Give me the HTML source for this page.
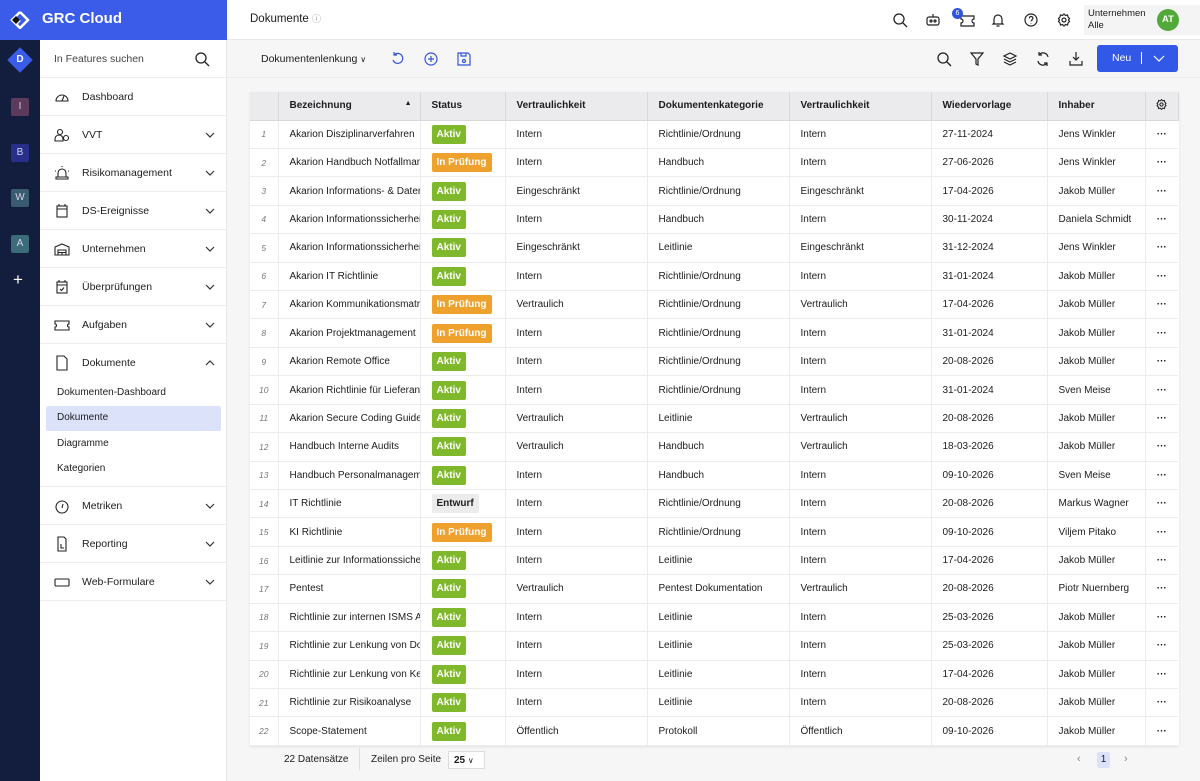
<!DOCTYPE html>
<html><head><meta charset="utf-8">
<style>
*{box-sizing:border-box;margin:0;padding:0}
body{width:1200px;height:781px;overflow:hidden;font-family:"Liberation Sans",sans-serif;color:#1c1c1c;background:#f6f6f7;position:relative;font-size:10px}
.abs{position:absolute}
#rail{left:0;top:40px;width:40px;height:741px;background:#131d3e}
#brand{left:0;top:0;width:227px;height:40px;background:#3a5ce9;color:#fff}
#brand .t{position:absolute;left:42px;top:10px;font-size:15px;font-weight:bold}
#top{left:227px;top:0;width:973px;height:40px;background:#fff;border-bottom:1px solid #e8e8ea}
#side{left:40px;top:40px;width:187px;height:741px;background:#fff;border-right:1px solid #e6e6e8}
.it{position:absolute;left:0;width:187px;height:38px;border-bottom:1px solid #ececee;font-size:10.5px}
.it span{position:absolute;left:42px;top:13px}
.it svg.ic{position:absolute;left:14px;top:11px}
.it .ch{position:absolute;right:12px;top:15px}
.sub{position:absolute;left:17px;font-size:10px}
.rb{position:absolute;left:11px;width:18px;height:18px;border-radius:2px;color:#cfd4e6;font-size:10px;text-align:center;line-height:18px}
table{position:absolute;left:250px;top:92px;width:928px;border-collapse:collapse;background:#fff;box-shadow:0 1px 3px rgba(0,0,0,.08);table-layout:fixed}
th{height:28px;background:#ebebed;text-align:left;font-weight:bold;font-size:10px;padding-left:11px;border-right:1px solid #d9d9dc;border-bottom:1px solid #d9d9dc}
td{height:28.43px;font-size:10px;padding-left:11px;border-bottom:1px solid #ececee;border-right:1px solid #ececee;white-space:nowrap;overflow:hidden}
td:first-child{text-align:center;padding:0;font-style:italic;color:#777;font-size:8.5px}
td:last-child{border-right:none;text-align:center;padding:0;font-weight:bold}
.b{display:inline-block;color:#fff;font-weight:bold;padding:0 5px;height:19px;line-height:19px;border-radius:2px;font-size:10px}
.a{background:#7fb82a}.p{background:#eea12c}.e{background:#ececec;color:#222}
.tb{position:absolute;top:51px}
</style></head><body>
<div id="brand" class="abs">
<svg class="abs" style="left:10px;top:11px" width="20" height="18" viewBox="0 0 20 18"><path d="M10 1 L18 9 L10 17 L6 13 L10 9 M10 1 L2 9 L6 13" fill="none" stroke="#fff" stroke-width="2.5"/><path d="M6 5 L2 9 L6 13 L10 9z" fill="#111"/></svg>
<div class="t">GRC Cloud</div></div>
<div id="rail" class="abs">
<div class="abs" style="left:11px;top:11px;width:18px;height:18px;background:#3a5ce9;transform:rotate(45deg)"></div>
<div class="abs" style="left:11px;top:14px;width:18px;text-align:center;color:#fff;font-size:10px;font-weight:bold">D</div>
<div class="rb" style="top:58px;background:#5b3a5c">I</div>
<div class="rb" style="top:104px;background:#272f8a">B</div>
<div class="rb" style="top:149px;background:#3a5a70">W</div>
<div class="rb" style="top:195px;background:#3c6b7a">A</div>
<div class="abs" style="left:13px;top:230px;color:#fff;font-size:17px">+</div>
</div>
<div id="top" class="abs">
<div class="abs" style="left:23px;top:12px;font-size:11.5px">Dokumente <span style="color:#999;font-size:9px">ⓘ</span></div>
<svg class="abs" style="left:665px;top:12px" width="16" height="16" viewBox="0 0 16 16" fill="none" stroke="#222" stroke-width="1.3"><circle cx="7" cy="7" r="5"/><path d="M11 11l4 4"/></svg>
<svg class="abs" style="left:698px;top:12px" width="16" height="16" viewBox="0 0 16 16" fill="none" stroke="#222" stroke-width="1.2"><rect x="2" y="5" width="12" height="8" rx="2"/><circle cx="6" cy="9" r="1"/><circle cx="10" cy="9" r="1"/><path d="M8 5V2"/></svg>
<svg class="abs" style="left:731px;top:12px" width="18" height="16" viewBox="0 0 18 16" fill="none" stroke="#222" stroke-width="1.2"><path d="M3 4h13v3a2 2 0 000 4v3H3v-3a2 2 0 000-4z"/></svg>
<div class="abs" style="left:725px;top:8px;width:11px;height:11px;border-radius:50%;background:#2e55e0;color:#fff;font-size:7px;text-align:center;line-height:11px">6</div>
<svg class="abs" style="left:763px;top:12px" width="16" height="16" viewBox="0 0 16 16" fill="none" stroke="#222" stroke-width="1.2"><path d="M4 11V7a4 4 0 018 0v4l1 1H3z M6.5 14h3"/></svg>
<svg class="abs" style="left:796px;top:12px" width="16" height="16" viewBox="0 0 16 16" fill="none" stroke="#222" stroke-width="1.2"><circle cx="8" cy="8" r="6"/><path d="M6.3 6.3a1.8 1.8 0 113 1.3c-.8.5-1.3.8-1.3 1.8M8 11v.5"/></svg>
<svg class="abs" style="left:829px;top:12px" width="16" height="16" viewBox="0 0 16 16" fill="none" stroke="#222" stroke-width="1.2"><circle cx="8" cy="8" r="2"/><path d="M8 2l1.5 1.5 2-.5.5 2 1.5 1.5-1 1.5 1 1.5-1.5 1.5-.5 2-2-.5L8 14l-1.5-1.5-2 .5-.5-2L2.5 9.5 3.5 8l-1-1.5L4 5l.5-2 2 .5z"/></svg>
<div class="abs" style="left:857px;top:5px;width:116px;height:30px;background:#f4f4f5"></div>
<div class="abs" style="left:861px;top:8px;font-size:9.5px;line-height:12px">Unternehmen<br>Alle</div>
<div class="abs" style="left:930px;top:9px;width:22px;height:22px;border-radius:50%;background:#52a838;color:#fff;font-size:9.5px;font-weight:bold;text-align:center;line-height:22px">AT</div>
</div>
<div id="side" class="abs">
<div class="it" style="top:0"><span style="left:14px;color:#444;top:13px">In Features suchen</span><svg class="abs" style="left:154px;top:11px" width="16" height="16" viewBox="0 0 16 16" fill="none" stroke="#222" stroke-width="1.3"><circle cx="7" cy="7" r="5"/><path d="M11 11l4 4"/></svg></div>
<div class="it" style="top:38px"><svg class="ic" width="16" height="16" viewBox="0 0 16 16" fill="none" stroke="#222" stroke-width="1.1"><path d="M2 12a6 6 0 1112 0z M8 12l2-5"/></svg><span>Dashboard</span></div>
<div class="it" style="top:76px"><svg class="ic" width="16" height="16" viewBox="0 0 16 16" fill="none" stroke="#222" stroke-width="1.1"><circle cx="6" cy="5" r="2.5"/><path d="M1 14v-2a4 4 0 018 0v2z"/><circle cx="12" cy="11" r="2.5"/></svg><span>VVT</span><svg class="ch" width="10" height="8" viewBox="0 0 10 8" fill="none" stroke="#333" stroke-width="1.2"><path d="M1 2l4 4 4-4"/></svg></div>
<div class="it" style="top:114px"><svg class="ic" width="16" height="16" viewBox="0 0 16 16" fill="none" stroke="#222" stroke-width="1.1"><path d="M4 12V8a4 4 0 018 0v4M2 12h12v2H2z M1 6h1M14 6h1M8 1v1"/></svg><span>Risikomanagement</span><svg class="ch" width="10" height="8" viewBox="0 0 10 8" fill="none" stroke="#333" stroke-width="1.2"><path d="M1 2l4 4 4-4"/></svg></div>
<div class="it" style="top:152px"><svg class="ic" width="16" height="16" viewBox="0 0 16 16" fill="none" stroke="#222" stroke-width="1.1"><rect x="3" y="3" width="10" height="11"/><path d="M3 6h10M5 1v2M11 1v2"/></svg><span>DS-Ereignisse</span><svg class="ch" width="10" height="8" viewBox="0 0 10 8" fill="none" stroke="#333" stroke-width="1.2"><path d="M1 2l4 4 4-4"/></svg></div>
<div class="it" style="top:190px"><svg class="ic" width="16" height="16" viewBox="0 0 16 16" fill="none" stroke="#222" stroke-width="1.1"><path d="M1 6l7-3 7 3v8H1z M4 9h8v5H4z M4 11.5h8M8 11.5V14"/></svg><span>Unternehmen</span><svg class="ch" width="10" height="8" viewBox="0 0 10 8" fill="none" stroke="#333" stroke-width="1.2"><path d="M1 2l4 4 4-4"/></svg></div>
<div class="it" style="top:228px"><svg class="ic" width="16" height="16" viewBox="0 0 16 16" fill="none" stroke="#222" stroke-width="1.1"><rect x="3" y="3" width="10" height="11"/><path d="M3 6h10M5 1v2M11 1v2M6 10l1.5 1.5L10 8.5"/></svg><span>Überprüfungen</span><svg class="ch" width="10" height="8" viewBox="0 0 10 8" fill="none" stroke="#333" stroke-width="1.2"><path d="M1 2l4 4 4-4"/></svg></div>
<div class="it" style="top:266px"><svg class="ic" width="16" height="16" viewBox="0 0 16 16" fill="none" stroke="#222" stroke-width="1.1"><path d="M1 4h14v3a1.5 1.5 0 000 3v3H1v-3a1.5 1.5 0 000-3z"/></svg><span>Aufgaben</span><svg class="ch" width="10" height="8" viewBox="0 0 10 8" fill="none" stroke="#333" stroke-width="1.2"><path d="M1 2l4 4 4-4"/></svg></div>
<div class="it" style="top:304px;height:143px"><svg class="ic" width="16" height="16" viewBox="0 0 16 16" fill="none" stroke="#222" stroke-width="1.1"><path d="M3 1h7l3 3v11H3z"/></svg><span>Dokumente</span><svg class="ch" width="10" height="8" viewBox="0 0 10 8" fill="none" stroke="#333" stroke-width="1.2"><path d="M1 6l4-4 4 4"/></svg>
<div class="sub" style="top:43px">Dokumenten-Dashboard</div>
<div class="abs" style="left:6px;top:62px;width:175px;height:25px;background:#dde2fb;border-radius:2px"></div>
<div class="sub" style="top:68px">Dokumente</div>
<div class="sub" style="top:94px">Diagramme</div>
<div class="sub" style="top:119px">Kategorien</div></div>
<div class="it" style="top:447px"><svg class="ic" width="16" height="16" viewBox="0 0 16 16" fill="none" stroke="#222" stroke-width="1.1"><circle cx="8" cy="9" r="6"/><path d="M8 10l1-4"/></svg><span>Metriken</span><svg class="ch" width="10" height="8" viewBox="0 0 10 8" fill="none" stroke="#333" stroke-width="1.2"><path d="M1 2l4 4 4-4"/></svg></div>
<div class="it" style="top:485px"><svg class="ic" width="16" height="16" viewBox="0 0 16 16" fill="none" stroke="#222" stroke-width="1.1"><path d="M4 1h6l2 2v12H4z M7 8v4h3"/></svg><span>Reporting</span><svg class="ch" width="10" height="8" viewBox="0 0 10 8" fill="none" stroke="#333" stroke-width="1.2"><path d="M1 2l4 4 4-4"/></svg></div>
<div class="it" style="top:523px"><svg class="ic" width="16" height="16" viewBox="0 0 16 16" fill="none" stroke="#222" stroke-width="1.1"><rect x="1" y="5" width="14" height="7" rx="1"/></svg><span>Web-Formulare</span><svg class="ch" width="10" height="8" viewBox="0 0 10 8" fill="none" stroke="#333" stroke-width="1.2"><path d="M1 2l4 4 4-4"/></svg></div>
</div>
<div class="abs" style="left:227px;top:40px;width:973px;height:38px;border-bottom:1px solid #ececee"></div>
<div class="abs" style="left:261px;top:53px;font-size:10.5px">Dokumentenlenkung <span style="font-size:8px">∨</span></div>
<svg class="tb" style="left:390px" width="16" height="16" viewBox="0 0 16 16" fill="none" stroke="#3553d8" stroke-width="1.2"><path d="M4 4a5 5 0 11-1 5M4 1v3h3"/></svg>
<svg class="tb" style="left:423px" width="16" height="16" viewBox="0 0 16 16" fill="none" stroke="#3553d8" stroke-width="1.2"><circle cx="8" cy="8" r="6"/><path d="M8 5v6M5 8h6"/></svg>
<svg class="tb" style="left:456px" width="16" height="16" viewBox="0 0 16 16" fill="none" stroke="#3553d8" stroke-width="1.2"><path d="M2 2h10l2 2v10H2z M5 2v3h5V2"/><circle cx="8" cy="10" r="1.5"/></svg>
<svg class="tb" style="left:936px" width="16" height="16" viewBox="0 0 16 16" fill="none" stroke="#222" stroke-width="1.3"><circle cx="7" cy="7" r="5"/><path d="M11 11l4 4"/></svg>
<svg class="tb" style="left:969px" width="16" height="16" viewBox="0 0 16 16" fill="none" stroke="#222" stroke-width="1.2"><path d="M2 2h12l-5 6v6l-2-1V8z"/></svg>
<svg class="tb" style="left:1002px" width="16" height="16" viewBox="0 0 16 16" fill="none" stroke="#222" stroke-width="1.2"><path d="M8 2l6 3-6 3-6-3z M2 8l6 3 6-3M2 11l6 3 6-3"/></svg>
<svg class="tb" style="left:1035px" width="16" height="16" viewBox="0 0 16 16" fill="none" stroke="#222" stroke-width="1.2"><path d="M13 6a5 5 0 00-9-2M3 10a5 5 0 009 2M4 1v3h3M12 15v-3H9"/></svg>
<svg class="tb" style="left:1068px" width="16" height="16" viewBox="0 0 16 16" fill="none" stroke="#222" stroke-width="1.2"><path d="M8 1v8M5 6l3 3 3-3M2 10v4h12v-4"/></svg>
<div class="abs" style="left:1097px;top:45px;width:81px;height:27px;background:#3258e8;border-radius:3px;color:#fff;font-size:10.5px"><span class="abs" style="left:15px;top:7px">Neu</span><span class="abs" style="left:44px;top:7px;width:1px;height:12px;background:#fff"></span><svg class="abs" style="left:56px;top:10px" width="12" height="8" viewBox="0 0 12 8" fill="none" stroke="#fff" stroke-width="1.2"><path d="M1 1l5 5 5-5"/></svg></div>
<table>
<colgroup><col style="width:28px"><col style="width:142px"><col style="width:85px"><col style="width:142px"><col style="width:142px"><col style="width:142px"><col style="width:116px"><col style="width:98px"><col style="width:33px"></colgroup>
<tr><th></th><th>Bezeichnung <span style="float:right;margin-right:8px;font-size:7px">▲</span></th><th>Status</th><th>Vertraulichkeit</th><th>Dokumentenkategorie</th><th>Vertraulichkeit</th><th>Wiedervorlage</th><th>Inhaber</th><th style="padding-left:9px"><svg width="13" height="13" viewBox="0 0 16 16" fill="none" stroke="#222" stroke-width="1.3"><circle cx="8" cy="8" r="2"/><path d="M8 2l1.5 1.5 2-.5.5 2 1.5 1.5-1 1.5 1 1.5-1.5 1.5-.5 2-2-.5L8 14l-1.5-1.5-2 .5-.5-2L2.5 9.5 3.5 8l-1-1.5L4 5l.5-2 2 .5z"/></svg></th></tr>
<tr><td>1</td><td>Akarion Disziplinarverfahren</td><td><span class="b a">Aktiv</span></td><td>Intern</td><td>Richtlinie/Ordnung</td><td>Intern</td><td>27-11-2024</td><td>Jens Winkler</td><td>···</td></tr>
<tr><td>2</td><td>Akarion Handbuch Notfallmanagement</td><td><span class="b p">In Prüfung</span></td><td>Intern</td><td>Handbuch</td><td>Intern</td><td>27-06-2026</td><td>Jens Winkler</td><td>···</td></tr>
<tr><td>3</td><td>Akarion Informations- &amp; Datenschutz</td><td><span class="b a">Aktiv</span></td><td>Eingeschränkt</td><td>Richtlinie/Ordnung</td><td>Eingeschränkt</td><td>17-04-2026</td><td>Jakob Müller</td><td>···</td></tr>
<tr><td>4</td><td>Akarion Informationssicherheit</td><td><span class="b a">Aktiv</span></td><td>Intern</td><td>Handbuch</td><td>Intern</td><td>30-11-2024</td><td>Daniela Schmidt</td><td>···</td></tr>
<tr><td>5</td><td>Akarion Informationssicherheit</td><td><span class="b a">Aktiv</span></td><td>Eingeschränkt</td><td>Leitlinie</td><td>Eingeschränkt</td><td>31-12-2024</td><td>Jens Winkler</td><td>···</td></tr>
<tr><td>6</td><td>Akarion IT Richtlinie</td><td><span class="b a">Aktiv</span></td><td>Intern</td><td>Richtlinie/Ordnung</td><td>Intern</td><td>31-01-2024</td><td>Jakob Müller</td><td>···</td></tr>
<tr><td>7</td><td>Akarion Kommunikationsmatrix</td><td><span class="b p">In Prüfung</span></td><td>Vertraulich</td><td>Richtlinie/Ordnung</td><td>Vertraulich</td><td>17-04-2026</td><td>Jakob Müller</td><td>···</td></tr>
<tr><td>8</td><td>Akarion Projektmanagement</td><td><span class="b p">In Prüfung</span></td><td>Intern</td><td>Richtlinie/Ordnung</td><td>Intern</td><td>31-01-2024</td><td>Jakob Müller</td><td>···</td></tr>
<tr><td>9</td><td>Akarion Remote Office</td><td><span class="b a">Aktiv</span></td><td>Intern</td><td>Richtlinie/Ordnung</td><td>Intern</td><td>20-08-2026</td><td>Jakob Müller</td><td>···</td></tr>
<tr><td>10</td><td>Akarion Richtlinie für Lieferanten</td><td><span class="b a">Aktiv</span></td><td>Intern</td><td>Richtlinie/Ordnung</td><td>Intern</td><td>31-01-2024</td><td>Sven Meise</td><td>···</td></tr>
<tr><td>11</td><td>Akarion Secure Coding Guide</td><td><span class="b a">Aktiv</span></td><td>Vertraulich</td><td>Leitlinie</td><td>Vertraulich</td><td>20-08-2026</td><td>Jakob Müller</td><td>···</td></tr>
<tr><td>12</td><td>Handbuch Interne Audits</td><td><span class="b a">Aktiv</span></td><td>Vertraulich</td><td>Handbuch</td><td>Vertraulich</td><td>18-03-2026</td><td>Jakob Müller</td><td>···</td></tr>
<tr><td>13</td><td>Handbuch Personalmanagement</td><td><span class="b a">Aktiv</span></td><td>Intern</td><td>Handbuch</td><td>Intern</td><td>09-10-2026</td><td>Sven Meise</td><td>···</td></tr>
<tr><td>14</td><td>IT Richtlinie</td><td><span class="b e">Entwurf</span></td><td>Intern</td><td>Richtlinie/Ordnung</td><td>Intern</td><td>20-08-2026</td><td>Markus Wagner</td><td>···</td></tr>
<tr><td>15</td><td>KI Richtlinie</td><td><span class="b p">In Prüfung</span></td><td>Intern</td><td>Richtlinie/Ordnung</td><td>Intern</td><td>09-10-2026</td><td>Viljem Pitako</td><td>···</td></tr>
<tr><td>16</td><td>Leitlinie zur Informationssicherheit</td><td><span class="b a">Aktiv</span></td><td>Intern</td><td>Leitlinie</td><td>Intern</td><td>17-04-2026</td><td>Jakob Müller</td><td>···</td></tr>
<tr><td>17</td><td>Pentest</td><td><span class="b a">Aktiv</span></td><td>Vertraulich</td><td>Pentest Dokumentation</td><td>Vertraulich</td><td>20-08-2026</td><td>Piotr Nuernberg</td><td>···</td></tr>
<tr><td>18</td><td>Richtlinie zur internen ISMS Audits</td><td><span class="b a">Aktiv</span></td><td>Intern</td><td>Leitlinie</td><td>Intern</td><td>25-03-2026</td><td>Jakob Müller</td><td>···</td></tr>
<tr><td>19</td><td>Richtlinie zur Lenkung von Dokumenten</td><td><span class="b a">Aktiv</span></td><td>Intern</td><td>Leitlinie</td><td>Intern</td><td>25-03-2026</td><td>Jakob Müller</td><td>···</td></tr>
<tr><td>20</td><td>Richtlinie zur Lenkung von Kennzahlen</td><td><span class="b a">Aktiv</span></td><td>Intern</td><td>Leitlinie</td><td>Intern</td><td>17-04-2026</td><td>Jakob Müller</td><td>···</td></tr>
<tr><td>21</td><td>Richtlinie zur Risikoanalyse</td><td><span class="b a">Aktiv</span></td><td>Intern</td><td>Leitlinie</td><td>Intern</td><td>20-08-2026</td><td>Jakob Müller</td><td>···</td></tr>
<tr><td>22</td><td>Scope-Statement</td><td><span class="b a">Aktiv</span></td><td>Öffentlich</td><td>Protokoll</td><td>Öffentlich</td><td>09-10-2026</td><td>Jakob Müller</td><td>···</td></tr>
</table>
<div class="abs" style="left:284px;top:754px;font-size:10px">22 Datensätze</div>
<div class="abs" style="left:359px;top:748px;width:1px;height:22px;background:#ddd"></div>
<div class="abs" style="left:371px;top:754px;font-size:10px">Zeilen pro Seite</div>
<div class="abs" style="left:448px;top:751px;width:37px;height:18px;border:1px solid #ddd;background:#fff;font-size:10px;padding:3px 5px;font-weight:bold">25 <span style="font-weight:normal;font-size:8px">∨</span></div>
<div class="abs" style="left:1077px;top:753px;color:#888;font-size:11px">‹</div>
<div class="abs" style="left:1097px;top:752px;width:13px;height:16px;background:#dde2fb;border-radius:2px;font-size:10px;text-align:center;line-height:16px">1</div>
<div class="abs" style="left:1124px;top:753px;color:#888;font-size:11px">›</div>
</body></html>
